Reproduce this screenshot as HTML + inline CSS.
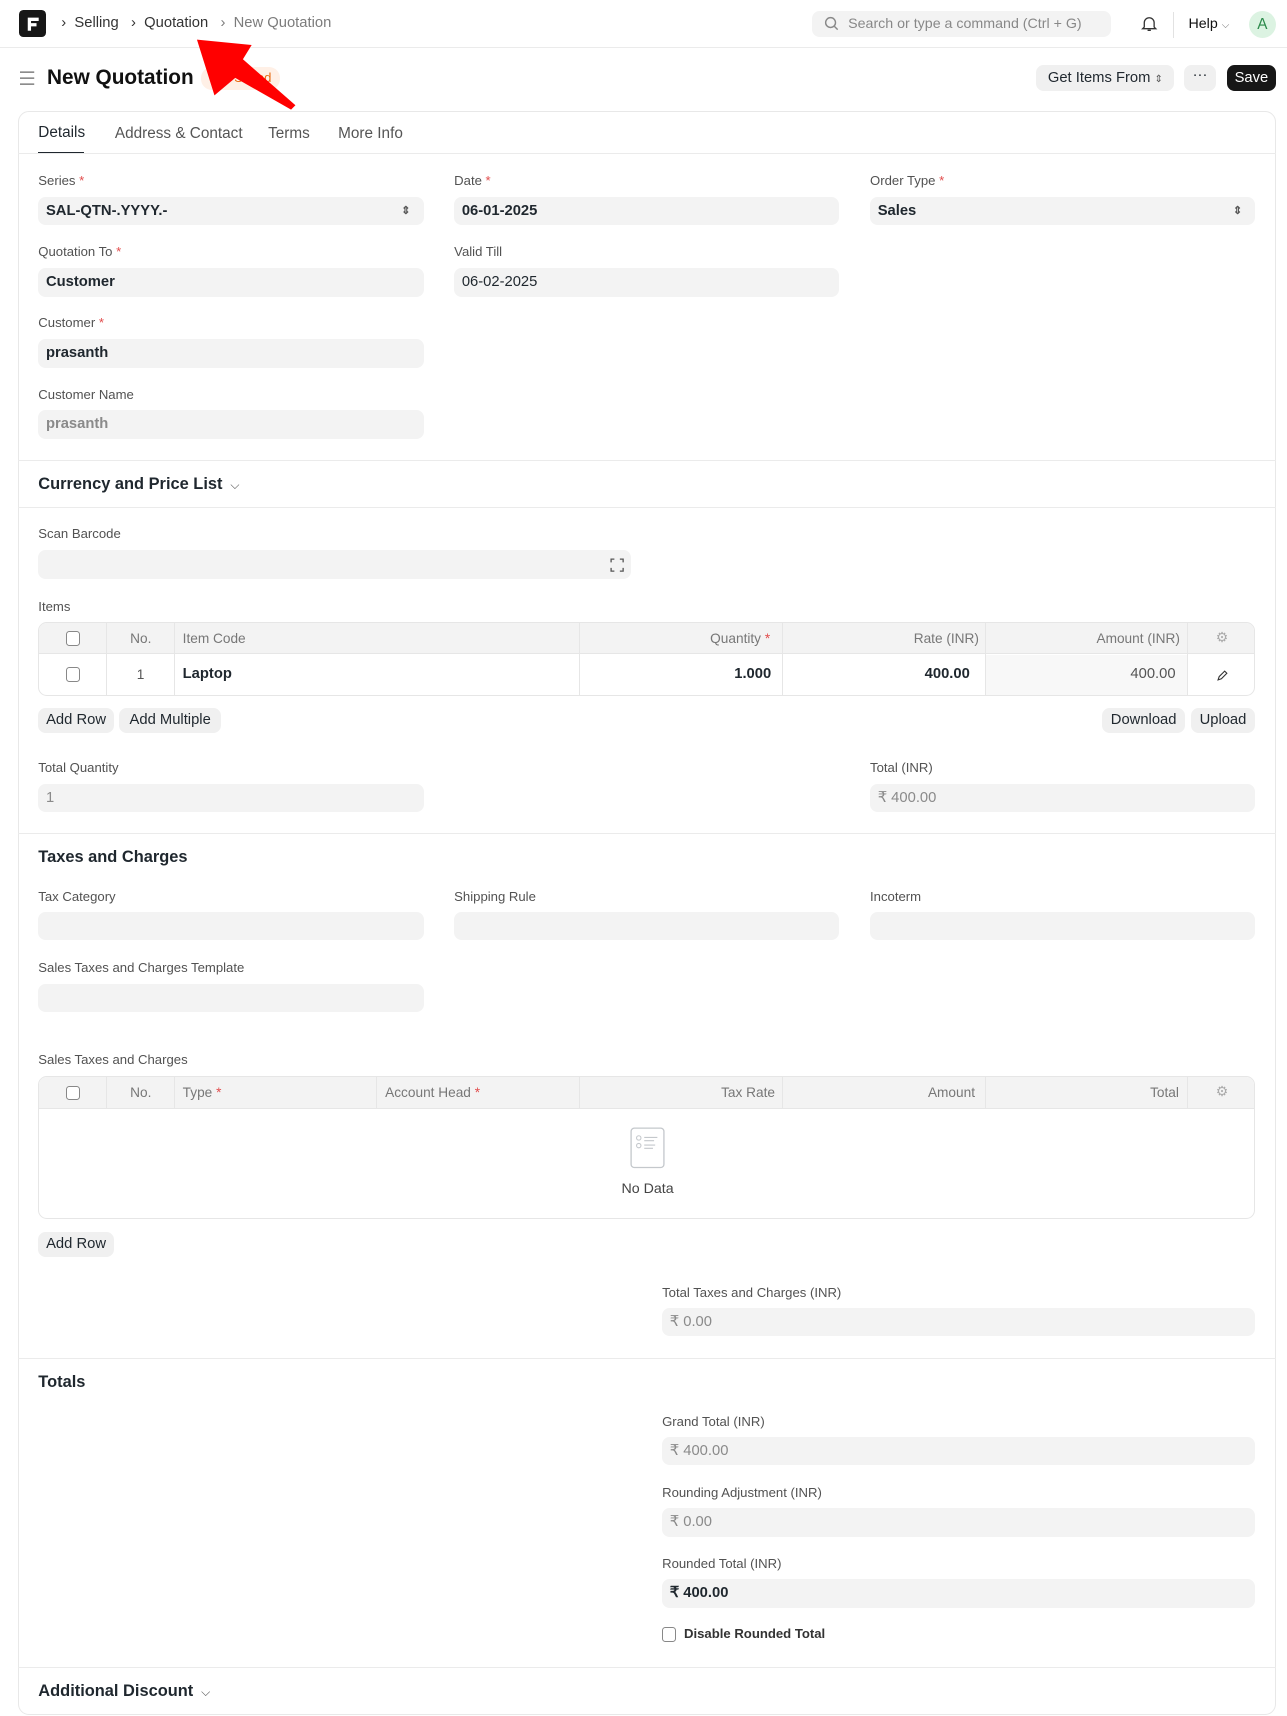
<!DOCTYPE html>
<html><head><meta charset="utf-8">
<style>
*{box-sizing:border-box;margin:0;padding:0}
html,body{width:1287px;height:1716px;overflow:hidden;background:#fff}
#w{position:relative;width:1176px;height:1568px;zoom:1.09439;font-family:"Liberation Sans",sans-serif;color:#1f272e}
.a{position:absolute;white-space:nowrap}
.lbl{position:absolute;font-size:12px;color:#525252}
.req{color:#e24c4c}
.in{position:absolute;height:26px;background:#f3f3f3;border-radius:7px;font-size:13.5px;padding:0 7px;line-height:26px;font-weight:bold;color:#1f272e}
.in.ro{font-weight:normal;color:#8a8a8a}
.hl{position:absolute;left:16px;width:1150px;height:1px;background:#ebebeb}
.h{position:absolute;font-size:15px;font-weight:bold;color:#1f272e}
.btn{position:absolute;height:23px;background:#f0f0f0;border-radius:7px;font-size:13.5px;line-height:23px;text-align:center;color:#1f272e}
.tbl{position:absolute;left:35px;width:1112px;border:1px solid #e6e6e6;border-radius:8px;overflow:hidden}
.th{position:absolute;top:0;height:29px;background:#f3f3f3;border-bottom:1px solid #e6e6e6;width:100%}
.c{position:absolute;font-size:12.5px;color:#777;line-height:29px}
.vl{position:absolute;width:1px;background:#e6e6e6}
.cb{position:absolute;width:13px;height:13px;border:1px solid #888;border-radius:3px;background:#fff}
</style></head><body><div id="w">
<div class="a" style="left:17px;top:9px;width:25px;height:25px;background:#171717;border-radius:4px"></div>
<svg class="a" style="left:17px;top:9px" width="25" height="25"><path d="M8 7h10v3h-7v2h5v3h-5v4H8z" fill="#fff"/></svg>
<div class="a" style="left:56px;top:14px;font-size:13.5px;color:#333">›&nbsp;&nbsp;Selling&nbsp;&nbsp;&nbsp;›&nbsp;&nbsp;Quotation&nbsp;&nbsp;&nbsp;<span style="color:#7c7c7c">›&nbsp;&nbsp;New Quotation</span></div>
<div class="a" style="left:742px;top:10px;width:273px;height:24px;background:#f3f3f3;border-radius:7px"></div>
<svg class="a" style="left:753px;top:15px" width="14" height="14"><circle cx="6" cy="6" r="4.5" fill="none" stroke="#888" stroke-width="1.3"/><path d="M9.5 9.5l3 3" stroke="#888" stroke-width="1.3"/></svg>
<div class="a" style="left:775px;top:15px;font-size:13px;color:#888">Search or type a command (Ctrl + G)</div>
<svg class="a" style="left:1043px;top:14px" width="15" height="16"><path d="M3 11V7a4.5 4.5 0 019 0v4l1.5 1.5h-12z M6 14h3" fill="none" stroke="#333" stroke-width="1.2"/></svg>
<div class="a" style="left:1072px;top:11px;width:1px;height:24px;background:#e2e2e2"></div>
<div class="a" style="left:1086px;top:15px;font-size:13px;color:#111">Help <span style="color:#777;font-size:9px">⌵</span></div>
<div class="a" style="left:1141px;top:10px;width:25px;height:25px;border-radius:50%;background:#dcf3e2;color:#2b8a4a;font-size:14px;text-align:center;line-height:25px">A</div>
<div class="a" style="left:0;top:43px;width:1176px;height:1px;background:#ebebeb"></div>
<svg class="a" style="left:18px;top:65px" width="14" height="13"><path d="M0 1h13M0 6.5h13M0 12h13" stroke="#666" stroke-width="1.2"/></svg>
<div class="a" style="left:43px;top:60px;font-size:19px;font-weight:bold;color:#111">New Quotation</div>
<div class="a" style="left:184px;top:61px;width:72px;height:21px;background:#fff0e6;border-radius:10px;font-size:12px;color:#e86c13;text-align:center;line-height:21px">Not Saved</div>
<div class="btn" style="left:947px;top:59px;width:126px;height:24px;line-height:24px">Get Items From <span style="font-size:9px;color:#555">⇕</span></div>
<div class="btn" style="left:1082px;top:59px;width:29px;height:24px;line-height:20px">···</div>
<div class="btn" style="left:1121px;top:59px;width:45px;height:24px;line-height:24px;background:#171717;color:#fff">Save</div>
<div class="a" style="left:16px;top:101px;width:1150px;height:1466px;border:1px solid #e8e8e8;border-radius:10px"></div>
<div class="a" style="left:35px;top:113px;font-size:14px;color:#1f272e">Details</div>
<div class="a" style="left:35px;top:139px;width:42px;height:2px;background:#1f272e"></div>
<div class="a" style="left:105px;top:114px;font-size:14px;color:#555">Address &amp; Contact</div>
<div class="a" style="left:245px;top:114px;font-size:14px;color:#555">Terms</div>
<div class="a" style="left:309px;top:114px;font-size:14px;color:#555">More Info</div>
<div class="hl" style="top:140px"></div>
<div class="lbl" style="left:35px;top:158px">Series <span class="req">*</span></div>
<div class="in" style="left:35px;top:180px;width:352px">SAL-QTN-.YYYY.-<span style="position:absolute;right:12px;font-size:10px;color:#555">⇕</span></div>
<div class="lbl" style="left:415px;top:158px">Date <span class="req">*</span></div>
<div class="in" style="left:415px;top:180px;width:352px">06-01-2025</div>
<div class="lbl" style="left:795px;top:158px">Order Type <span class="req">*</span></div>
<div class="in" style="left:795px;top:180px;width:352px">Sales<span style="position:absolute;right:12px;font-size:10px;color:#555">⇕</span></div>
<div class="lbl" style="left:35px;top:223px">Quotation To <span class="req">*</span></div>
<div class="in" style="left:35px;top:245px;width:352px">Customer</div>
<div class="lbl" style="left:415px;top:223px">Valid Till</div>
<div class="in" style="left:415px;top:245px;width:352px;font-weight:normal">06-02-2025</div>
<div class="lbl" style="left:35px;top:288px">Customer <span class="req">*</span></div>
<div class="in" style="left:35px;top:310px;width:352px">prasanth</div>
<div class="lbl" style="left:35px;top:354px">Customer Name</div>
<div class="in" style="left:35px;top:375px;width:352px;color:#8a8a8a">prasanth</div>
<div class="hl" style="top:420px"></div>
<div class="h" style="left:35px;top:434px">Currency and Price List <span style="font-weight:normal;font-size:11px;color:#555">&nbsp;⌵</span></div>
<div class="hl" style="top:463px"></div>
<div class="lbl" style="left:35px;top:481px">Scan Barcode</div>
<div class="in" style="left:35px;top:503px;width:542px"></div>
<svg class="a" style="left:557px;top:510px" width="13" height="13"><path d="M1 4V1h3M9 1h3v3M12 9v3H9M4 12H1V9" fill="none" stroke="#555" stroke-width="1.2"/></svg>
<div class="lbl" style="left:35px;top:547px">Items</div>
<div class="tbl" style="top:568px;height:68px">
 <div class="th"></div>
 <div class="cb" style="left:24px;top:8px"></div><div class="cb" style="left:24px;top:41px"></div>
 <div class="vl" style="left:61px;top:0;height:68px"></div><div class="vl" style="left:123px;top:0;height:68px"></div>
 <div class="vl" style="left:493px;top:0;height:68px"></div><div class="vl" style="left:679px;top:0;height:68px"></div>
 <div class="vl" style="left:864px;top:0;height:68px"></div><div class="vl" style="left:1049px;top:0;height:68px"></div>
 <div class="a" style="left:865px;top:30px;width:184px;height:37px;background:#f8f8f8"></div>
 <div class="c" style="left:83px;top:0">No.</div>
 <div class="c" style="left:131px;top:0">Item Code</div>
 <div class="c" style="left:613px;top:0">Quantity <span class="req">*</span></div>
 <div class="c" style="left:799px;top:0">Rate (INR)</div>
 <div class="c" style="left:966px;top:0">Amount (INR)</div>
 <div class="c" style="left:1075px;top:0;font-size:13px;color:#aaa">⚙</div>
 <div class="a" style="left:89px;top:41px;font-size:12.5px;color:#555">1</div>
 <div class="a" style="left:131px;top:40px;font-size:13.5px;font-weight:bold">Laptop</div>
 <div class="a" style="left:635px;top:40px;font-size:13.5px;font-weight:bold">1.000</div>
 <div class="a" style="left:809px;top:40px;font-size:13.5px;font-weight:bold">400.00</div>
 <div class="a" style="left:997px;top:40px;font-size:13.5px;color:#555">400.00</div>
 <svg class="a" style="left:1076px;top:43px" width="10" height="10"><path d="M1 9l1-3 5-5 2 2-5 5z" fill="none" stroke="#333" stroke-width="1"/></svg>
</div>
<div class="btn" style="left:35px;top:647px;width:69px">Add Row</div>
<div class="btn" style="left:109px;top:647px;width:93px">Add Multiple</div>
<div class="btn" style="left:1007px;top:647px;width:76px">Download</div>
<div class="btn" style="left:1088px;top:647px;width:59px">Upload</div>
<div class="lbl" style="left:35px;top:694px">Total Quantity</div>
<div class="in ro" style="left:35px;top:716px;width:352px">1</div>
<div class="lbl" style="left:795px;top:694px">Total (INR)</div>
<div class="in ro" style="left:795px;top:716px;width:352px">₹ 400.00</div>
<div class="hl" style="top:761px"></div>
<div class="h" style="left:35px;top:775px">Taxes and Charges</div>
<div class="lbl" style="left:35px;top:812px">Tax Category</div>
<div class="in" style="left:35px;top:833px;width:352px"></div>
<div class="lbl" style="left:415px;top:812px">Shipping Rule</div>
<div class="in" style="left:415px;top:833px;width:352px"></div>
<div class="lbl" style="left:795px;top:812px">Incoterm</div>
<div class="in" style="left:795px;top:833px;width:352px"></div>
<div class="lbl" style="left:35px;top:877px">Sales Taxes and Charges Template</div>
<div class="in" style="left:35px;top:899px;width:352px"></div>
<div class="lbl" style="left:35px;top:961px">Sales Taxes and Charges</div>
<div class="tbl" style="top:983px;height:131px">
 <div class="th"></div>
 <div class="cb" style="left:24px;top:8px"></div>
 <div class="vl" style="left:61px;top:0;height:29px"></div><div class="vl" style="left:123px;top:0;height:29px"></div>
 <div class="vl" style="left:308px;top:0;height:29px"></div><div class="vl" style="left:493px;top:0;height:29px"></div>
 <div class="vl" style="left:679px;top:0;height:29px"></div><div class="vl" style="left:864px;top:0;height:29px"></div><div class="vl" style="left:1049px;top:0;height:29px"></div>
 <div class="c" style="left:83px;top:0">No.</div>
 <div class="c" style="left:131px;top:0">Type <span class="req">*</span></div>
 <div class="c" style="left:316px;top:0">Account Head <span class="req">*</span></div>
 <div class="c" style="left:623px;top:0">Tax Rate</div>
 <div class="c" style="left:812px;top:0">Amount</div>
 <div class="c" style="left:1015px;top:0">Total</div>
 <div class="c" style="left:1075px;top:0;font-size:13px;color:#aaa">⚙</div>
 <svg class="a" style="left:540px;top:46px" width="32" height="38"><rect x="1" y="1" width="30" height="36" rx="3" fill="none" stroke="#c4c8cc" stroke-width="1.2"/><circle cx="8" cy="10" r="2" fill="none" stroke="#c4c8cc"/><circle cx="8" cy="17" r="2" fill="none" stroke="#c4c8cc"/><path d="M13 9.5h12M13 16.5h10M13 12.5h9M13 19.5h8" stroke="#c4c8cc"/></svg>
 <div class="a" style="left:532px;top:95px;font-size:13px;color:#444">No Data</div>
</div>
<div class="btn" style="left:35px;top:1126px;width:69px">Add Row</div>
<div class="lbl" style="left:605px;top:1174px">Total Taxes and Charges (INR)</div>
<div class="in ro" style="left:605px;top:1195px;width:542px">₹ 0.00</div>
<div class="hl" style="top:1241px"></div>
<div class="h" style="left:35px;top:1255px">Totals</div>
<div class="lbl" style="left:605px;top:1292px">Grand Total (INR)</div>
<div class="in ro" style="left:605px;top:1313px;width:542px">₹ 400.00</div>
<div class="lbl" style="left:605px;top:1357px">Rounding Adjustment (INR)</div>
<div class="in ro" style="left:605px;top:1378px;width:542px">₹ 0.00</div>
<div class="lbl" style="left:605px;top:1422px">Rounded Total (INR)</div>
<div class="in" style="left:605px;top:1443px;width:542px">₹ 400.00</div>
<div class="cb" style="left:605px;top:1487px"></div>
<div class="a" style="left:625px;top:1486px;font-size:12px;font-weight:bold;color:#333">Disable Rounded Total</div>
<div class="hl" style="top:1523px"></div>
<div class="h" style="left:35px;top:1537px">Additional Discount <span style="font-weight:normal;font-size:11px;color:#555">&nbsp;⌵</span></div>
<svg class="a" style="left:170px;top:30px" width="110" height="75"><polygon points="10,6 60,11 52,24 100,66 96,70 45,41 26,57" fill="#ff0000"/></svg>
</div></body></html>
